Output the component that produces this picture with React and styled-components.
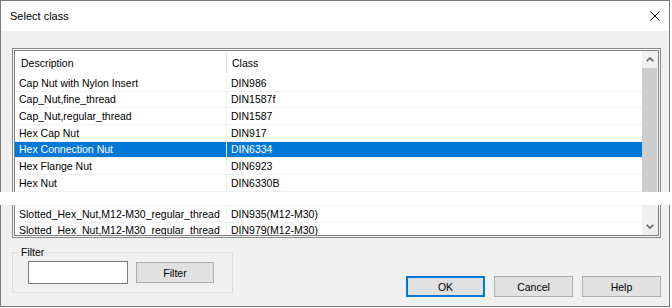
import React from "react";
import styled, { createGlobalStyle } from "styled-components";

const Global = createGlobalStyle`
  html, body { margin: 0; padding: 0; background: #ffffff; }
  body { font-family: "Liberation Sans", Arial, sans-serif; }
  * { box-sizing: border-box; }
`;

const Page = styled.div`
  position: relative;
  width: 672px;
  height: 308px;
  background: #ffffff;
`;

const Window = styled.div`
  width: 670px;
  height: 307px;
  border: 1px solid #7a7a7a;
  display: flex;
  flex-direction: column;
  background: #f0f0f0;
  font-family: "Liberation Sans", Arial, sans-serif;
  font-size: 10.5px;
  color: #000;
`;

const TitleBar = styled.div`
  height: 30px;
  flex: none;
  background: #ffffff;
  display: flex;
  align-items: center;
  justify-content: space-between;
  padding: 0 9px;
  font-size: 11px;
`;

const CloseIcon = styled.svg`
  width: 10px;
  height: 10px;
  display: block;
`;

const Body = styled.div`
  flex: 1;
  display: flex;
  flex-direction: column;
  padding: 17px 8px 0 11px;
`;

const ListBox = styled.div`
  height: 190px;
  flex: none;
  border: 1px solid #8a8a8a;
  padding: 1px;
  background: #f4f4f4;
  display: flex;
`;

const ListInner = styled.div`
  flex: 1;
  border: 1px solid #828282;
  background: #ffffff;
  display: flex;
  overflow: hidden;
`;

const Grid = styled.div`
  flex: 1;
  display: flex;
  flex-direction: column;
  overflow: hidden;
`;

const HeaderRow = styled.div`
  display: grid;
  grid-template-columns: 212px 1fr;
  height: 24px;
  flex: none;
`;

const HeaderCell = styled.div`
  display: flex;
  align-items: center;
  padding-left: ${(p) => (p.$first ? 6 : 5)}px;
  border-right: ${(p) => (p.$first ? "1px solid #e5e5e5" : "none")};
  margin: ${(p) => (p.$first ? "1px 0 1px 0" : "0")};
`;

const Row = styled.div`
  display: grid;
  grid-template-columns: 212px 1fr;
  height: ${(p) => p.$h}px;
  flex: none;
  border-bottom: 1px solid #f0f0f0;
  background: ${(p) => (p.$selected ? "#0078d7" : "#ffffff")};
  color: ${(p) => (p.$selected ? "#ffffff" : "#000000")};
`;

const Cell = styled.div`
  display: flex;
  align-items: center;
  padding-left: 4px;
  white-space: nowrap;
  overflow: hidden;
  border-right: ${(p) => (p.$first ? "1px solid #f0f0f0" : "none")};
`;

const ScrollBar = styled.div`
  width: 16px;
  flex: none;
  display: flex;
  flex-direction: column;
  background: #f0f0f0;
`;

const ArrowBtn = styled.div`
  height: 17px;
  flex: none;
  display: flex;
  align-items: center;
  justify-content: center;
  padding-right: 1px;
`;

const Track = styled.div`
  flex: 1;
  display: flex;
  flex-direction: column;
`;

const Thumb = styled.div`
  height: 130px;
  background: #cdcdcd;
  margin-right: 1px;
`;

const Footer = styled.div`
  flex: 1;
  display: flex;
  align-items: flex-end;
  justify-content: space-between;
  padding-bottom: 9px;
`;

const GroupBox = styled.fieldset`
  width: 221px;
  margin: 0 0 4px 0;
  padding: 0 0 8px 6px;
  border: 1px solid #dcdcdc;
  display: flex;
  align-items: flex-start;
  gap: 8px;
  min-width: 0;
`;

const Legend = styled.legend`
  margin-left: 0;
  padding: 0 2px;
  line-height: 12px;
  font-size: 10.5px;
`;

const TextBox = styled.div`
  width: 100px;
  height: 23px;
  margin: 3px 0 0 9px;
  background: #ffffff;
  border: 1px solid #7a7a7a;
`;

const Button = styled.div`
  width: ${(p) => p.$w || 79}px;
  height: 21px;
  margin-top: ${(p) => p.$mt || 0}px;
  display: flex;
  align-items: center;
  justify-content: center;
  background: #e1e1e1;
  border: ${(p) => (p.$default ? "2px solid #0078d7" : "1px solid #adadad")};
`;

const ButtonRow = styled.div`
  display: flex;
  gap: 9px;
`;

const Band = styled.div`
  position: absolute;
  left: 0;
  right: 0;
  top: 192px;
  height: 13px;
  background: #ffffff;
`;

const Chevron = ({ up }) => (
  <svg width="8" height="5" viewBox="0 0 8 5" style={{ display: "block" }}>
    <polyline
      points={up ? "0.7,4.3 4,1 7.3,4.3" : "0.7,0.7 4,4 7.3,0.7"}
      fill="none"
      stroke="#606060"
      strokeWidth="1.6"
    />
  </svg>
);

const rows = [
  { d: "Cap Nut with Nylon Insert", c: "DIN986" },
  { d: "Cap_Nut,fine_thread", c: "DIN1587f" },
  { d: "Cap_Nut,regular_thread", c: "DIN1587" },
  { d: "Hex Cap Nut", c: "DIN917" },
  { d: "Hex Connection Nut", c: "DIN6334", sel: true },
  { d: "Hex Flange Nut", c: "DIN6923" },
  { d: "Hex Nut", c: "DIN6330B" },
  { d: "", c: "", h: 14.33 },
  { d: "Slotted_Hex_Nut,M12-M30_regular_thread", c: "DIN935(M12-M30)" },
  { d: "Slotted_Hex_Nut,M12-M30_regular_thread", c: "DIN979(M12-M30)" },
];

export default function App() {
  return (
    <Page>
      <Global />
      <Window>
        <TitleBar>
          <span>Select class</span>
          <CloseIcon viewBox="0 0 10 10">
            <line x1="0.5" y1="0.5" x2="9.5" y2="9.5" stroke="#000" strokeWidth="1" />
            <line x1="9.5" y1="0.5" x2="0.5" y2="9.5" stroke="#000" strokeWidth="1" />
          </CloseIcon>
        </TitleBar>
        <Body>
          <ListBox>
            <ListInner>
              <Grid>
                <HeaderRow>
                  <HeaderCell $first>Description</HeaderCell>
                  <HeaderCell>Class</HeaderCell>
                </HeaderRow>
                {rows.map((r, i) => (
                  <Row key={i} $selected={r.sel} $h={r.h || 16.667}>
                    <Cell $first>{r.d}</Cell>
                    <Cell>{r.c}</Cell>
                  </Row>
                ))}
              </Grid>
              <ScrollBar>
                <ArrowBtn>
                  <Chevron up />
                </ArrowBtn>
                <Track>
                  <Thumb />
                </Track>
                <ArrowBtn>
                  <Chevron />
                </ArrowBtn>
              </ScrollBar>
            </ListInner>
          </ListBox>
          <Footer>
            <GroupBox>
              <Legend>Filter</Legend>
              <TextBox />
              <Button $w={78} $mt={4}>Filter</Button>
            </GroupBox>
            <ButtonRow>
              <Button $default>OK</Button>
              <Button>Cancel</Button>
              <Button>Help</Button>
            </ButtonRow>
          </Footer>
        </Body>
      </Window>
      <Band />
    </Page>
  );
}
